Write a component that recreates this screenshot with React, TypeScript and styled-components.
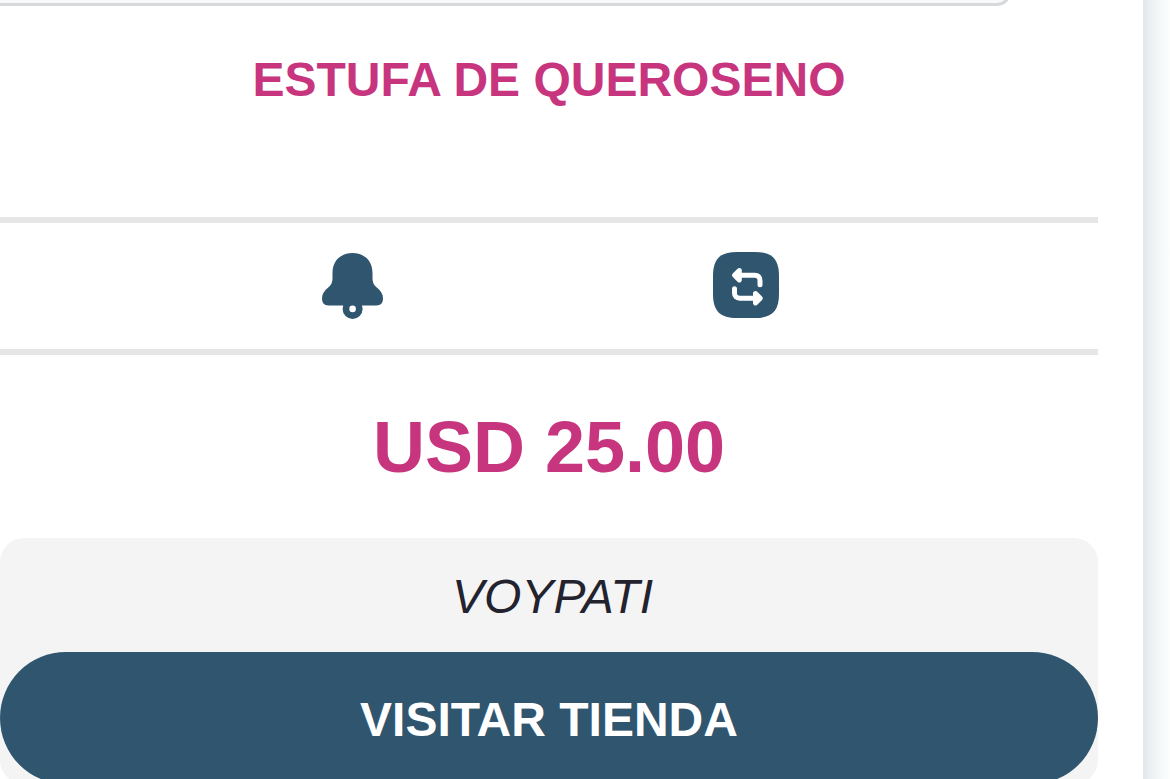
import * as React from "react";
import styled, { createGlobalStyle } from "styled-components";

const colors = {
  primary: "#2f556f",
  accent: "#c8357f",
  dark: "#23222f",
  line: "#e6e6e7",
  muted: "#f4f4f4",
};

const GlobalStyle = createGlobalStyle`
  * {
    box-sizing: border-box;
  }

  body {
    margin: 0;
    overflow: hidden;
    background: white;
    font-family: "Liberation Sans", Arial, Helvetica, sans-serif;
  }
`;

const BellIcon = () => (
  <svg width="61" height="66" viewBox="0 0 61 66" fill={colors.primary}>
    <path d="M30.5 0C18.5 0 10.5 8 10.5 20v5.500c0 3.700-1.300 6.500-4 8.700C2.300 37.600 0 41 0 45.500C0 50 2.500 52.400 6.500 52.400h48c4 0 6.500-2.400 6.500-6.900c0-4.500-2.300-7.900-6.500-11.300c-2.700-2.200-4-5-4-8.700V20C50.500 8 42.500 0 30.500 0Z" />
    <circle cx="30.600" cy="55.900" r="10" />
    <circle cx="30.600" cy="55.900" r="3.300" fill="white" />
  </svg>
);

const RepeatIcon = () => (
  <svg width="66" height="66" viewBox="0 0 66 66" fill="none">
    <path
      d="M24 0H42C59 0 66 7 66 24V42C66 59 59 66 42 66H24C7 66 0 59 0 42V24C0 7 7 0 24 0Z"
      fill={colors.primary}
    />
    <g
      stroke="white"
      strokeWidth="5"
      strokeLinecap="round"
      strokeLinejoin="round"
    >
      <path d="M23 23.200h18.800c3.200 0 5.200 2 5.200 5.200v4.300" />
      <path d="M26.300 18.500l-4.800 4.700l4.800 4.700z" fill="white" />
      <path d="M45 46.200h-18.300c-3.200 0-5.200-2-5.200-5.200v-4.300" />
      <path d="M42.500 41.500l4.800 4.700l-4.800 4.700z" fill="white" />
    </g>
  </svg>
);

const App = () => (
  <StyledPage>
    <GlobalStyle />
    <StyledCard>
      <StyledPreview />
      <StyledTitle>ESTUFA DE QUEROSENO</StyledTitle>
      <StyledActions>
        <StyledIconButton aria-label="Notificar">
          <BellIcon />
        </StyledIconButton>
        <StyledIconButton aria-label="Comparar" $lift={2}>
          <RepeatIcon />
        </StyledIconButton>
      </StyledActions>
      <StyledPrice>USD 25.00</StyledPrice>
      <StyledStore>
        <StyledStoreName>VOYPATI</StyledStoreName>
        <StyledButton>VISITAR TIENDA</StyledButton>
      </StyledStore>
    </StyledCard>
    <StyledShade />
  </StyledPage>
);

const StyledPage = styled.div`
  display: flex;
  height: 779px;
  overflow: hidden;
`;

const StyledCard = styled.div`
  display: flex;
  flex-direction: column;
  width: 1143px;
  padding-right: 45px;
  background: white;
`;

const StyledShade = styled.div`
  flex: 1;
  background: linear-gradient(
    to right,
    #dfe7ea 0,
    #e8edef 5px,
    #f1f4f6 12px,
    #f8fafb 20px,
    #fcfdfd 27px
  );
`;

const StyledPreview = styled.div`
  flex: none;
  width: 1011px;
  height: 60px;
  margin-top: -54px;
  border: 3px solid #d8d9dc;
  border-left: 0;
  border-radius: 0 0 14px 0;
  background: #f8f9fb;
`;

const StyledTitle = styled.h1`
  flex: none;
  height: 211px;
  margin: 0;
  padding-top: 46px;
  color: ${colors.accent};
  font-size: 48px;
  line-height: 56px;
  text-align: center;
`;

const StyledActions = styled.div`
  flex: none;
  display: flex;
  align-items: center;
  justify-content: center;
  gap: 330px;
  height: 138px;
  padding-left: 2px;
  border-top: 6px solid ${colors.line};
  border-bottom: 6px solid ${colors.line};
`;

const StyledIconButton = styled.button<{ $lift?: number }>`
  display: flex;
  padding: 0 0 ${({ $lift = 0 }) => $lift}px;
  border: 0;
  background: none;
`;

const StyledPrice = styled.div`
  flex: none;
  height: 183px;
  padding-top: 52px;
  color: ${colors.accent};
  font-size: 72px;
  font-weight: bold;
  line-height: 80px;
  text-align: center;
`;

const StyledStore = styled.div`
  flex: none;
  height: 246px;
  border-radius: 24px;
  background: ${colors.muted};
`;

const StyledStoreName = styled.div`
  height: 114px;
  padding-top: 31px;
  padding-left: 7px;
  color: ${colors.dark};
  font-size: 48px;
  font-style: italic;
  line-height: 56px;
  text-align: center;
`;

const StyledButton = styled.button`
  width: 100%;
  height: 132px;
  padding: 2px 0 0;
  border: 0;
  border-radius: 66px;
  background: ${colors.primary};
  color: white;
  font-family: inherit;
  font-size: 48px;
  font-weight: bold;
`;

export default App;
